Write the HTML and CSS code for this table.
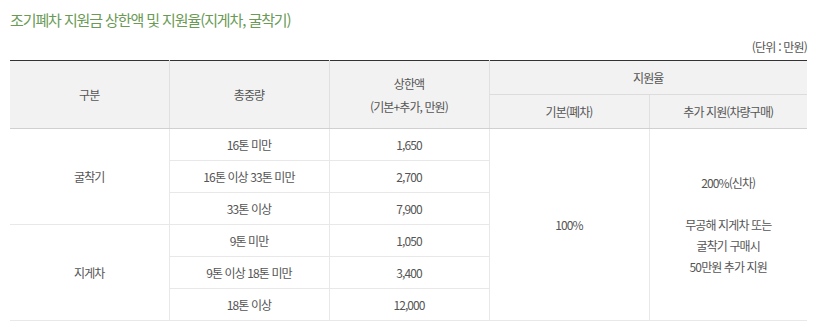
FILE: index.html
```html
<!DOCTYPE html>
<html lang="ko">
<head>
<meta charset="utf-8">
<link rel="stylesheet" href="styles.css">
</head>
<body>
<div class="wrap">
  <h3 class="title">조기폐차 지원금 상한액 및 지원율(지게차, 굴착기)</h3>
  <p class="unit">(단위 : 만원)</p>
  <table class="tbl">
    <colgroup>
      <col class="c1"><col class="c2"><col class="c3"><col class="c4"><col class="c5">
    </colgroup>
    <thead>
      <tr class="h1">
        <th rowspan="2">구분</th>
        <th rowspan="2">총중량</th>
        <th rowspan="2" class="two">상한액<br>(기본+추가, 만원)</th>
        <th colspan="2" class="nolr">지원율</th>
      </tr>
      <tr class="h2">
        <th>기본(폐차)</th>
        <th class="nor">추가 지원(차량구매)</th>
      </tr>
    </thead>
    <tbody>
      <tr>
        <td rowspan="3" class="nol">굴착기</td>
        <td>16톤 미만</td>
        <td>1,650</td>
        <td rowspan="6">100%</td>
        <td rowspan="6" class="nor multi">200%(신차)<br><br>무공해 지게차 또는<br>굴착기 구매시<br>50만원 추가 지원</td>
      </tr>
      <tr><td>16톤 이상 33톤 미만</td><td>2,700</td></tr>
      <tr><td>33톤 이상</td><td>7,900</td></tr>
      <tr>
        <td rowspan="3" class="nol">지게차</td>
        <td>9톤 미만</td>
        <td>1,050</td>
      </tr>
      <tr><td>9톤 이상 18톤 미만</td><td>3,400</td></tr>
      <tr><td>18톤 이상</td><td>12,000</td></tr>
    </tbody>
  </table>
</div>
</body>
</html>
```
FILE: styles.css
```css
* { box-sizing: border-box; }
html, body { margin: 0; padding: 0; background: #fff; }
body {
  font-family: "Noto Sans CJK KR", "Noto Sans", sans-serif;
  color: #555;
}
.wrap {
  padding: 10px 11px 0 10px;
}
.title {
  margin: 0;
  font-size: 15px;
  font-weight: 400;
  line-height: 20px;
  color: #6a9a56;
  letter-spacing: -1.1px;
}
.unit {
  margin: 7px 0 0 0;
  text-align: right;
  font-size: 12px;
  line-height: 20px;
  letter-spacing: -0.8px;
  color: #555;
}
.tbl {
  width: 797px;
  margin-top: 3px;
  border-collapse: collapse;
  table-layout: fixed;
  border-top: 1px solid #333;
  border-bottom: 1px solid #ccc;
  font-size: 12px;
  letter-spacing: -0.9px;
}
.c1 { width: 159px; }
.c2, .c3, .c4 { width: 160px; }
.c5 { width: 158px; }
.tbl tr { height: 32px; }
.tbl .h1, .tbl .h2 { height: 34px; }
.tbl th {
  background: #f2f2f2;
  font-weight: 400;
  color: #555;
  border: 1px solid #e0e0e0;
  border-bottom: 1px solid #d0d0d0;
  text-align: center;
  padding: 0;
  height: auto;
}
.tbl thead tr.h1 th { border-top: 0; }
.tbl th.two { line-height: 23px; }
.tbl thead tr.h1 th.nolr { border-right: 0; border-bottom: 1px solid #dcdcdc; }
.tbl thead tr.h1 th:first-child { border-left: 0; }
.tbl td {
  border: 1px solid #e8e8e8;
  text-align: center;
  padding: 0;
  color: #555;
  line-height: 16px;
}
.tbl td.nol { border-left: 0; }
.tbl .nor { border-right: 0; }
.tbl td.multi { line-height: 21px; }
```
